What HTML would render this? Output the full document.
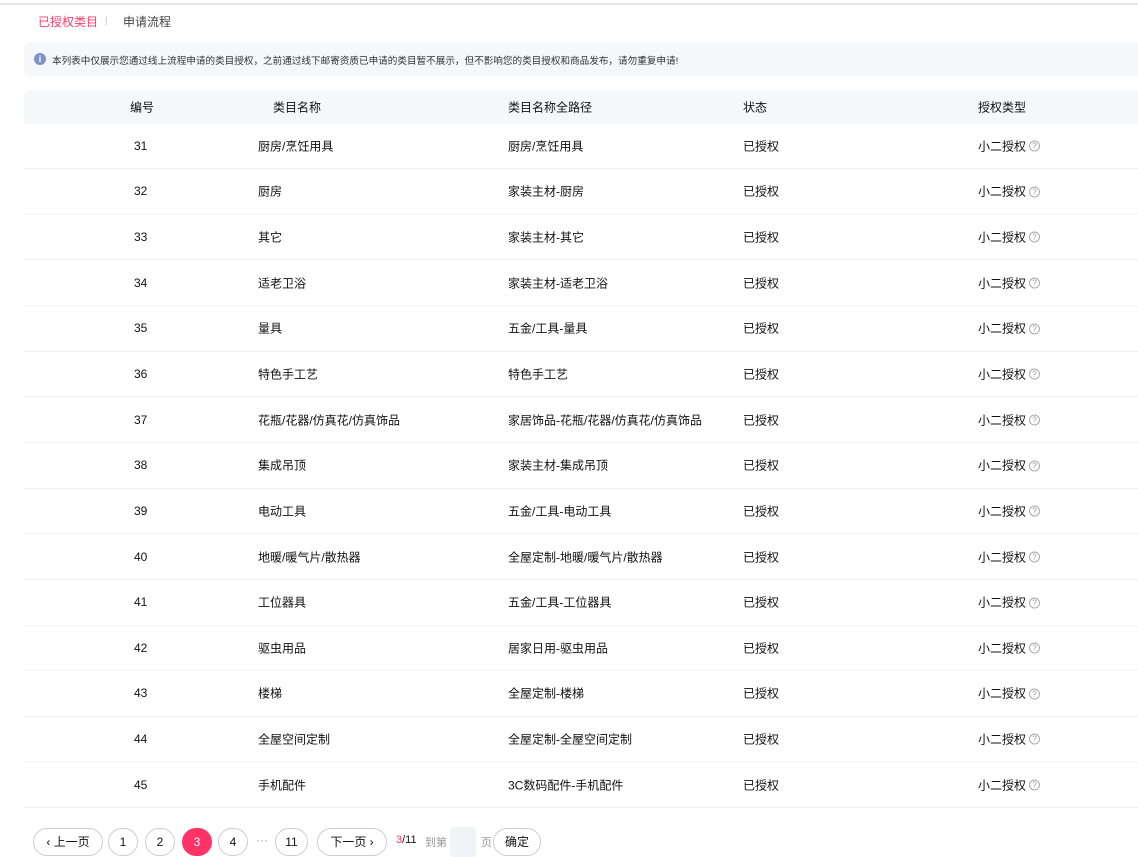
<!DOCTYPE html>
<html><head><meta charset="utf-8"><style>
*{margin:0;padding:0;box-sizing:border-box}
body{width:1138px;height:853px;overflow:hidden;background:#fff;font-family:"Liberation Sans","Noto Sans CJK SC",sans-serif;font-size:12px;color:#111;position:relative}
.topline{position:absolute;left:0;top:3px;width:1138px;height:2px;background:#e4e6ec}
.tab{position:absolute;top:13px;font-size:12px}
.notice{position:absolute;left:24px;top:42px;width:1130px;height:34px;background:#f6f7fa;border-radius:6px}
.notice .ic{position:absolute;left:10px;top:11px;width:12px;height:12px;border-radius:50%;background:#7f93c6;color:#fff;font-size:9px;line-height:12px;text-align:center;font-weight:bold}
.notice span{position:absolute;left:28px;top:11px;font-size:9.6px;color:#333}
.thead{position:absolute;left:24px;top:90px;width:1120px;height:34px;background:#f6f7fa;border-radius:6px 0 0 0}
.c{position:absolute;white-space:nowrap}
.row{position:absolute;left:24px;width:1120px;height:45.64px;border-bottom:1px solid #eef0f4}
.row .c,.thead .c{top:50%;transform:translateY(-50%)}
.q{display:inline-block;width:11px;height:11px;border:1px solid #aaa;border-radius:50%;color:#999;font-size:8px;line-height:9px;text-align:center;margin-left:3px;vertical-align:middle;position:relative;top:-1px}
.pb{position:absolute;top:828px;height:28px;border:1px solid #ccc;border-radius:14px;text-align:center;line-height:26px;font-size:12px;background:#fff}
</style></head><body>
<div class="topline"></div>
<div class="tab" style="left:38px;color:#ff3d6a">已授权类目</div>
<div class="tab" style="left:105px;color:#bbb;font-size:9px;top:15px">|</div>
<div class="tab" style="left:123px;color:#444">申请流程</div>
<div class="notice"><div class="ic">i</div><span>本列表中仅展示您通过线上流程申请的类目授权，之前通过线下邮寄资质已申请的类目暂不展示，但不影响您的类目授权和商品发布，请勿重复申请!</span></div>
<div class="thead">
<div class="c" style="left:106px">编号</div>
<div class="c" style="left:249px">类目名称</div>
<div class="c" style="left:484px">类目名称全路径</div>
<div class="c" style="left:719px">状态</div>
<div class="c" style="left:954px">授权类型</div>
</div>
<div id="rows"></div>
<script>
var d=[["31","厨房/烹饪用具","厨房/烹饪用具"],["32","厨房","家装主材-厨房"],["33","其它","家装主材-其它"],["34","适老卫浴","家装主材-适老卫浴"],["35","量具","五金/工具-量具"],["36","特色手工艺","特色手工艺"],["37","花瓶/花器/仿真花/仿真饰品","家居饰品-花瓶/花器/仿真花/仿真饰品"],["38","集成吊顶","家装主材-集成吊顶"],["39","电动工具","五金/工具-电动工具"],["40","地暖/暖气片/散热器","全屋定制-地暖/暖气片/散热器"],["41","工位器具","五金/工具-工位器具"],["42","驱虫用品","居家日用-驱虫用品"],["43","楼梯","全屋定制-楼梯"],["44","全屋空间定制","全屋定制-全屋空间定制"],["45","手机配件","3C数码配件-手机配件"]];
var h="";d.forEach(function(r,i){h+='<div class="row" style="top:'+(123.5+i*45.64)+'px"><div class="c" style="left:110px">'+r[0]+'</div><div class="c" style="left:234px">'+r[1]+'</div><div class="c" style="left:484px">'+r[2]+'</div><div class="c" style="left:719px">已授权</div><div class="c" style="left:954px">小二授权<span class="q">?</span></div></div>'});
document.getElementById("rows").innerHTML=h;
</script>
<div class="pb" style="left:33px;width:70px">‹ 上一页</div>
<div class="pb" style="left:108px;width:30px">1</div>
<div class="pb" style="left:145px;width:30px">2</div>
<div class="pb" style="left:182px;width:30px;background:#ff3366;border-color:#ff3366;color:#fff">3</div>
<div class="pb" style="left:218px;width:30px">4</div>
<div class="c" style="left:256px;top:833px;color:#999">···</div>
<div class="pb" style="left:275px;width:33px">11</div>
<div class="pb" style="left:317px;width:70px">下一页 ›</div>
<div class="c" style="left:396px;top:834px;font-size:11px"><span style="color:#ff3366">3</span>/11</div>
<div class="c" style="left:425px;top:834px;font-size:11px;color:#999">到第</div>
<div style="position:absolute;left:450px;top:827px;width:26px;height:30px;background:#f2f3f6;border-radius:4px"></div>
<div class="c" style="left:481px;top:834px;font-size:11px;color:#999">页</div>
<div class="pb" style="left:493px;width:48px">确定</div>
</body></html>
